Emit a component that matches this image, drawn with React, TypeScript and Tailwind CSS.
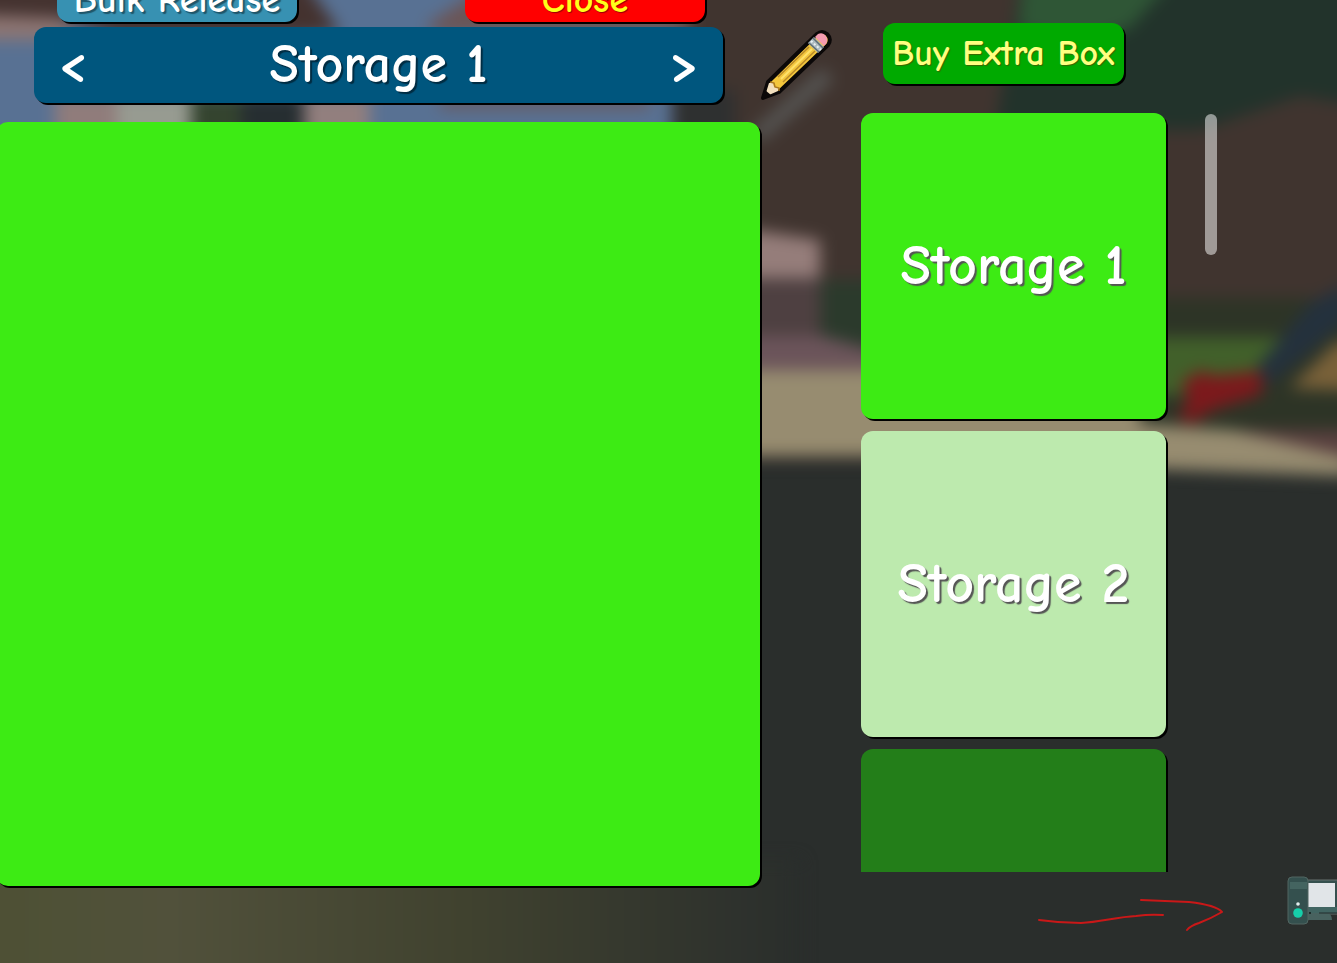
import { useState } from "react";

interface StorageBox {
  id: number;
  label: string;
  color: string;
}

const boxes: StorageBox[] = [
  { id: 1, label: "Storage 1", color: "bg-[#3deb14]" },
  { id: 2, label: "Storage 2", color: "bg-[#bdeaae]" },
  { id: 3, label: "", color: "bg-[#237e19]" },
];

// Blurred game world behind the menu
function Backdrop() {
  return (
    <svg
      className="absolute inset-0 w-full h-full"
      viewBox="0 0 1337 963"
      preserveAspectRatio="none"
      aria-hidden="true"
    >
      <defs>
        <filter id="soft" x="-5%" y="-5%" width="110%" height="110%" colorInterpolationFilters="sRGB">
          <feGaussianBlur stdDeviation="8" />
        </filter>
        <linearGradient id="ground" x1="0" x2="1">
          <stop offset="0" stopColor="#4d5033" />
          <stop offset="0.25" stopColor="#51513b" />
          <stop offset="0.6" stopColor="#40422f" />
          <stop offset="1" stopColor="#2a2e2c" />
        </linearGradient>
      </defs>
      <rect width="1337" height="963" fill="#2a2e2c" />
      <g filter="url(#soft)">
        <rect x="-40" y="860" width="840" height="150" fill="url(#ground)" />
        <rect x="670" y="-40" width="720" height="500" fill="#40342f" />
        {/* Sky and houses */}
        <rect x="-40" y="-40" width="712" height="180" fill="#587193" />
        <path d="M-40-40H290L340 32L300 36H120L60 18L-40 14Z" fill="#44322f" />
        <path d="M-40 14L60 18L80 40H-40Z" fill="#8d7572" />
        <path d="M425 26L480-10H690V34H440Z" fill="#6b5556" />
        <rect x="55" y="95" width="62" height="50" fill="#907c7b" />
        <rect x="117" y="95" width="74" height="50" fill="#979b91" />
        <rect x="191" y="95" width="50" height="50" fill="#34442f" />
        <rect x="241" y="95" width="63" height="50" fill="#262e31" />
        <rect x="304" y="95" width="66" height="50" fill="#927f7e" />
        <path d="M440 98H650V108H440Z" fill="#6b5556" />
        <rect x="675" y="90" width="60" height="50" fill="#2e3030" />
        <path d="M750 132L822 68L834 80L762 142Z" fill="#555452" />
        {/* Tree */}
        <path d="M1025-40H1390V110L1300 96L1200 130H995Z" fill="#22332b" />
        <path d="M1025-40H1190L1130 28L1080 45L1018 30Z" fill="#2f5636" />
        {/* Wall and path */}
        <path d="M740 228L820 240V280H740Z" fill="#957d7a" />
        <rect x="740" y="278" width="80" height="62" fill="#4e4041" />
        <rect x="821" y="280" width="60" height="70" fill="#2b3a2c" />
        <path d="M740 336H822L880 352V380H740Z" fill="#6b545a" />
        <rect x="740" y="370" width="440" height="86" fill="#978c70" />
        {/* Garden */}
        <rect x="1140" y="298" width="240" height="134" fill="#2d3426" />
        <path d="M1140 337H1285L1250 395H1140Z" fill="#41602a" />
        <path d="M1290 388L1337 342H1390V392Z" fill="#796139" />
        <path d="M1256 368L1310 304L1345 284V322L1268 385Z" fill="#24313d" />
        <path d="M1182 382L1202 370L1212 376L1262 371V394L1212 410L1190 424L1178 416L1188 402Z" fill="#7c191c" />
        <path d="M1140 430H1390V468H1140Z" fill="#59403f" />
        <path d="M1140 424L1232 430L1350 458V476L1140 468Z" fill="#978c70" />
      </g>
    </svg>
  );
}

function PencilIcon() {
  return (
    <svg className="w-full h-full" viewBox="0 0 74 74" aria-hidden="true">
      <path
        d="M4 70L9 54L58 6Q63 2 68 6Q73 11 69 17L20 64Z"
        fill="#f3c63c"
        stroke="#0b0808"
        strokeWidth="4"
        strokeLinejoin="round"
      />
      <path d="M6 68L10 55L14 55L15 59L19 60L19 63L10 67Z" fill="#f2dfbd" />
      <path d="M3 71L6 62L12 67Z" fill="#0b0808" />
      <path d="M11 54L15 55L16 59L20 60L20 63" fill="none" stroke="#a87720" strokeWidth="1.5" />
      <path d="M19 49L50 19M24 54L56 23" stroke="#b98a29" strokeWidth="1.5" />
      <path d="M22 51L53 21" stroke="#ffe169" strokeWidth="2" />
      <path d="M49 15L55 9L65 19L59 25Z" fill="#aebbc0" />
      <path d="M50 15L60 24M54 10L64 20" stroke="#5f6d73" strokeWidth="1.5" />
      <path d="M52 13L62 22" stroke="#e8eff0" strokeWidth="2" strokeDasharray="2 2" />
      <path d="M56 9L59 6Q63 4 66 7Q70 11 67 16L65 18Z" fill="#f49bb0" />
    </svg>
  );
}

function ConsoleIcon() {
  return (
    <svg className="w-[51px] h-[52px]" viewBox="0 0 51 52" aria-hidden="true">
      <rect x="20" y="5" width="34" height="34" fill="#35504e" stroke="#66706f" />
      <rect x="22" y="8" width="27" height="24" fill="#e1e5e8" />
      <rect x="22" y="32" width="29" height="6" fill="#416562" />
      <path d="M22 38H41Q46 39 46 45H22Z" fill="#48625f" />
      <path d="M33 38H51" stroke="#222d2c" />
      <rect x="2" y="2" width="20" height="47" rx="4" fill="#34504e" stroke="#506561" />
      <rect x="4" y="7" width="17" height="7" fill="#446460" />
      <circle cx="12" cy="29" r="1.8" fill="#e4efef" />
      <circle cx="12" cy="38" r="4.8" fill="#16cfaa" />
      <circle cx="24" cy="38" r="1" fill="#121c1b" />
    </svg>
  );
}

export default function App() {
  const [current, setCurrent] = useState(0);
  const title = boxes[current].label || `Storage ${boxes[current].id}`;

  function step(by: number) {
    setCurrent((current + by + boxes.length) % boxes.length);
  }

  return (
    <div className="relative h-screen overflow-hidden bg-[#2a2e2c] font-['Comic_Neue','DejaVu_Sans',sans-serif] text-white">
      <Backdrop />

      <div className="relative flex h-full">
        {/* Open box */}
        <main className="flex-1 min-w-0 flex flex-col pb-[77px]">
          <div className="-mt-[22px] pl-[57px] pr-[156px] flex justify-between">
            <button className="w-60 h-11 rounded-xl bg-[#3791b2] text-[38px] leading-10 font-bold whitespace-nowrap shadow-[2px_2px_0_#000] [text-shadow:2px_2px_1px_#1f5569]">
              Bulk Release
            </button>
            <button className="w-60 h-11 rounded-xl bg-[#ff0000] text-[#ffff19] text-[38px] leading-10 font-bold shadow-[2px_2px_0_#000] [text-shadow:1px_1px_1px_#990000]">
              Close
            </button>
          </div>

          <div className="mt-[5px] pl-[34px] pr-7 flex items-center gap-9">
            <div className="flex-1 h-[76px] px-6 flex items-center justify-between rounded-xl bg-[#00567e] shadow-[2px_2px_0_#000] [text-shadow:2px_2px_1px_#002c42]">
              <button aria-label="Previous box" onClick={() => step(-1)} className="text-[54px] leading-[60px] font-bold">
                &lt;
              </button>
              <h1 className="text-[54px] leading-[60px] font-bold whitespace-nowrap">{title}</h1>
              <button aria-label="Next box" onClick={() => step(1)} className="text-[54px] leading-[60px] font-bold">
                &gt;
              </button>
            </div>
            <button aria-label="Rename box" className="w-[74px] h-[74px]">
              <PencilIcon />
            </button>
          </div>

          <div className="mt-[19px] -ml-1 mr-[101px] flex-1 rounded-xl bg-[#3deb14] shadow-[2px_2px_0_#000]" />
        </main>

        {/* Box list */}
        <aside className="w-[476px] flex flex-col">
          <div className="pt-[23px] pl-[22px]">
            <button className="w-[241px] h-[61px] rounded-xl bg-[#00aa00] text-[#ffff80] text-[36px] leading-10 font-bold whitespace-nowrap shadow-[2px_2px_0_#000] [text-shadow:1px_1px_1px_#3c6400]">
              Buy Extra Box
            </button>
          </div>

          <div className="mt-[29px] flex-1 min-h-0 flex items-start gap-9">
            <ul className="h-full pr-[3px] flex flex-col gap-3 overflow-hidden">
              {boxes.map((box, i) => (
                <li key={box.id}>
                  <button
                    aria-label={`Open storage ${box.id}`}
                    onClick={() => setCurrent(i)}
                    className={`block w-[305px] h-[306px] rounded-xl text-[56px] leading-[60px] font-bold whitespace-nowrap shadow-[2px_2px_0_#000] [text-shadow:2px_2px_1px_#555] ${box.color}`}
                  >
                    {box.label}
                  </button>
                </li>
              ))}
            </ul>
            <div className="mt-px w-3 h-[141px] rounded-md bg-white/50" />
          </div>

          <div className="h-[91px] flex justify-end items-start gap-[60px]">
            <svg className="mt-6 w-[190px] h-10" viewBox="0 0 190 40" fill="none" stroke="#c91818" strokeWidth="2" strokeLinecap="round" strokeLinejoin="round" aria-hidden="true">
              <path d="M3 24Q24 27 45 27C65 26 80 21 100 20Q114 18 127 19" />
              <path d="M105 4L153 6Q180 9 186 16Q174 23 163 27Q154 30 151 34" />
            </svg>
            <div className="mt-[3px]">
              <ConsoleIcon />
            </div>
          </div>
        </aside>
      </div>
    </div>
  );
}
